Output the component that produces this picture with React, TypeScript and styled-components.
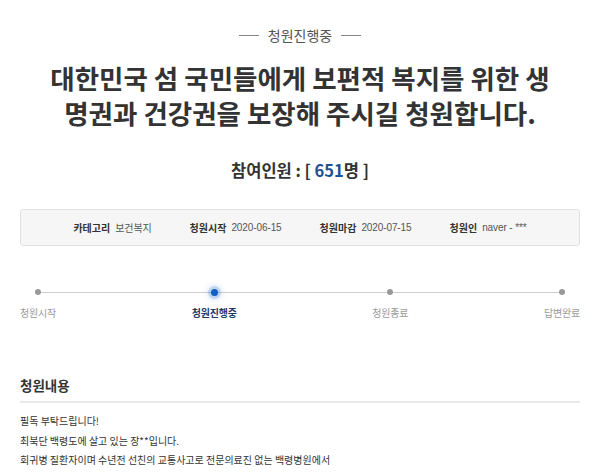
import React from 'react';
import styled, { createGlobalStyle } from 'styled-components';

const GlobalStyle = createGlobalStyle`
    html, body {
        margin: 0;
        padding: 0;
        background: #fff;
    }
    body {
        font-family: 'Liberation Sans', 'Noto Sans CJK KR', sans-serif;
        color: #333;
    }
`;

const Page = styled.div`
    width: 600px;
    height: 475px;
    overflow: hidden;
    padding: 0 20px;
    box-sizing: border-box;
`;

const Status = styled.div`
    display: flex;
    align-items: center;
    justify-content: center;
    gap: 9px;
    padding-top: 25px;
    height: 20px;
    line-height: 20px;
    font-size: 14px;
    color: #555;
    font-family: 'Noto Sans CJK KR', sans-serif;
    &::before,
    &::after {
        content: '';
        width: 20px;
        height: 1px;
        background: #888;
    }
`;

const Title = styled.h1`
    margin: 14.5px auto 0;
    max-width: 514px;
    text-align: center;
    word-break: break-all;
    font-family: 'Noto Sans CJK KR', sans-serif;
    font-size: 26.5px;
    line-height: 35px;
    font-weight: 700;
    color: #333;
`;

const Count = styled.div`
    margin-top: 28.5px;
    text-align: center;
    font-family: 'Noto Sans CJK KR', sans-serif;
    font-size: 16.5px;
    line-height: 24px;
    font-weight: 700;
    color: #333;
    .num {
        color: #1c4f94;
    }
`;

const InfoBox = styled.ul`
    margin: 27px 0 0;
    padding: 0;
    list-style: none;
    height: 37px;
    box-sizing: border-box;
    display: flex;
    align-items: center;
    justify-content: center;
    gap: 38px;
    background: #f6f6f6;
    border: 1px solid #e2e2e2;
    border-radius: 3px;
    font-size: 10px;
`;

const InfoItem = styled.li`
    display: flex;
    align-items: center;
    gap: 5px;
    .label {
        font-family: 'Noto Sans CJK KR', sans-serif;
        font-weight: 700;
        color: #333;
    }
    .value {
        color: #555;
        letter-spacing: -0.1px;
    }
`;

const Track = styled.ol`
    position: relative;
    margin: 39px 0 0;
    padding: 0;
    list-style: none;
    display: flex;
    justify-content: space-between;
    &::before {
        content: '';
        position: absolute;
        left: 18px;
        right: 18px;
        top: 7px;
        height: 1px;
        background: #cfcfcf;
    }
`;

const Step = styled.li<{ $active?: boolean }>`
    position: relative;
    display: flex;
    flex-direction: column;
    align-items: center;
    gap: 7px;
    .dot-wrap {
        height: 14px;
        display: flex;
        align-items: center;
    }
    .dot {
        width: ${(p) => (p.$active ? 7 : 6)}px;
        height: ${(p) => (p.$active ? 7 : 6)}px;
        border-radius: 50%;
        background: ${(p) => (p.$active ? '#0f5fc4' : '#999')};
        box-shadow: ${(p) => (p.$active ? '0 0 0 3px rgba(15,95,196,0.18), 0 0 6px 4px rgba(15,95,196,0.15)' : 'none')};
    }
    .name {
        font-family: 'Noto Sans CJK KR', sans-serif;
        font-size: 10px;
        line-height: 14px;
        letter-spacing: -0.2px;
        font-weight: ${(p) => (p.$active ? 700 : 400)};
        color: ${(p) => (p.$active ? '#1e3b6c' : '#9a9a9a')};
    }
`;

const SectionTitle = styled.h2`
    margin: 55px 0 0;
    padding-bottom: 6px;
    border-bottom: 2px solid #e8e8e8;
    font-family: 'Noto Sans CJK KR', sans-serif;
    font-size: 13.5px;
    line-height: 20px;
    font-weight: 700;
    color: #333;
`;

const Body = styled.div`
    margin-top: 8px;
    font-family: 'Noto Sans CJK KR', sans-serif;
    font-size: 10px;
    line-height: 19.5px;
    color: #333;
    p {
        margin: 0;
    }
`;

const info = [
    { label: '카테고리', value: '보건복지' },
    { label: '청원시작', value: '2020-06-15' },
    { label: '청원마감', value: '2020-07-15' },
    { label: '청원인', value: 'naver - ***' },
];

const steps = ['청원시작', '청원진행중', '청원종료', '답변완료'];
const activeStep = 1;

const lines = [
    '필독 부탁드립니다!',
    '최북단 백령도에 살고 있는 장**입니다.',
    '회귀병 질환자이며 수년전 선친의 교통사고로 전문의료진 없는 백령병원에서',
];

const App = () => {
    return (
        <>
            <GlobalStyle />
            <Page>
                <Status>청원진행중</Status>
                <Title>대한민국 섬 국민들에게 보편적 복지를 위한 생명권과 건강권을 보장해 주시길 청원합니다.</Title>
                <Count>
                    참여인원 : [ <span className="num">651</span>명 ]
                </Count>
                <InfoBox>
                    {info.map((item) => (
                        <InfoItem key={item.label}>
                            <span className="label">{item.label}</span>
                            <span className="value">{item.value}</span>
                        </InfoItem>
                    ))}
                </InfoBox>
                <Track>
                    {steps.map((s, i) => (
                        <Step key={s} $active={i === activeStep}>
                            <span className="dot-wrap">
                                <span className="dot" />
                            </span>
                            <span className="name">{s}</span>
                        </Step>
                    ))}
                </Track>
                <SectionTitle>청원내용</SectionTitle>
                <Body>
                    {lines.map((l) => (
                        <p key={l}>{l}</p>
                    ))}
                </Body>
            </Page>
        </>
    );
};

export default App;
